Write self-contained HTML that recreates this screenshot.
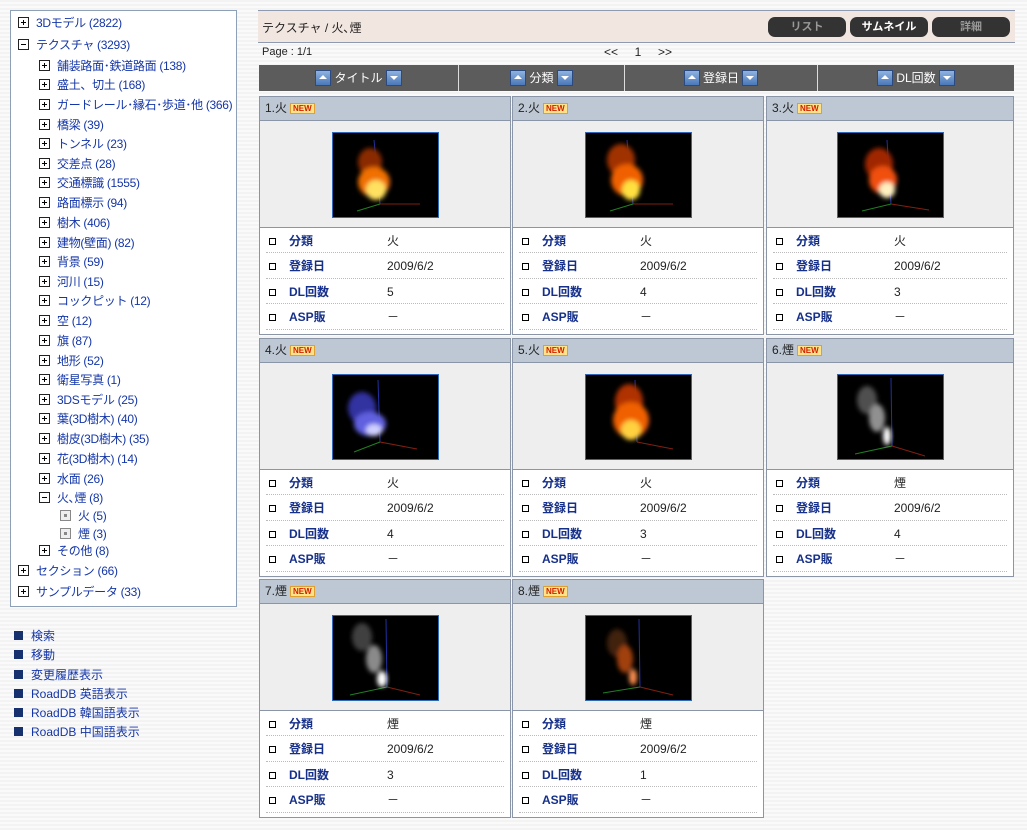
<!DOCTYPE html>
<html><head><meta charset="utf-8">
<style>
*{margin:0;padding:0;box-sizing:border-box}
body{width:1027px;height:830px;overflow:hidden;position:relative;font-family:"Liberation Sans","Noto Sans CJK JP",sans-serif;font-size:12px;color:#222;
background:repeating-linear-gradient(#f3f3f3 0 2px,#fafafa 2px 4px)}
a{color:#1a3cb0;text-decoration:none}
.abs{position:absolute}
#tree{left:10px;top:10px;width:227px;height:597px;background:#fff;border:1px solid #8ea0b8}
.ti{position:absolute;white-space:nowrap;line-height:14px;height:14px;letter-spacing:-0.3px}
.ti a{color:#1436a8}
.bx{display:inline-block;width:11px;height:11px;border:1px solid #222;vertical-align:-1px;margin-right:7px;position:relative;background:#fff}
.bx.p::before{content:"";position:absolute;left:2px;top:4px;width:5px;height:1px;background:#000}
.bx.p::after{content:"";position:absolute;left:4px;top:2px;width:1px;height:5px;background:#000}
.bx.m::before{content:"";position:absolute;left:2px;top:4px;width:5px;height:1px;background:#000}
.bx.d{border-color:#888;background:#eee}
.bx.d::before{content:"";position:absolute;left:3px;top:3px;width:3px;height:3px;background:#888}
.lk{position:absolute;left:14px;white-space:nowrap}
.lk::before{content:"";display:inline-block;width:9px;height:9px;background:#17306e;margin-right:8px;vertical-align:0}
.lk a{color:#1436a8}
#hdr{left:258px;top:10px;width:757px;height:33px;background:#f2e6e0;border-top:1px solid #8e9ab0;border-bottom:1px solid #8e9ab0}
.btn{position:absolute;top:6px;height:20px;width:78px;border-radius:7px;background:#333;color:#999;font-size:11px;text-align:center;line-height:20px;font-weight:bold}
#sort{left:259px;top:65px;width:755px;height:26px;background:#5c5c5c;color:#fff}
.sc{position:absolute;top:0;height:26px;line-height:26px;text-align:center;border-left:1px solid #ddd;font-size:12px}
.ar{display:inline-block;width:16px;height:16px;background:linear-gradient(#8fb3e0,#4a78b8);border:1px solid #2a4a80;vertical-align:-4px;margin:0 3px;position:relative}
.ar.u::after{content:"";position:absolute;left:3px;top:4px;border:4px solid transparent;border-bottom:4px solid #fff;border-top:0}
.ar.d::after{content:"";position:absolute;left:3px;top:5px;border:4px solid transparent;border-top:4px solid #fff;border-bottom:0}
.card{position:absolute;border:1px solid #8a96a8;background:#fff;height:239px}
.ct{height:24px;background:#bec8d4;border-bottom:1px solid #8a96a8;line-height:23px;padding-left:5px;font-size:12px}
.new{display:inline-block;font-size:8px;font-weight:bold;color:#d02000;background:#ffe28a;border:1px solid #e0a030;line-height:9px;padding:0 2px;margin-left:3px;vertical-align:1px}
.ci{height:107px;background:#eeeeee;border-bottom:1px solid #8a96a8;position:relative}
.ci svg{position:absolute;left:72px;top:11px}
.row{height:25.4px;margin:0 6px;border-bottom:1px dotted #bbb;position:relative;line-height:27px}
.row .cb{position:absolute;left:3px;top:10px;width:7px;height:7px;border:1px solid #000}
.row b{position:absolute;left:23px;color:#16308a;font-size:12px}
.row span{position:absolute;left:121px}
</style></head><body>
<svg width="0" height="0" style="position:absolute"><defs>
<filter id="bl"><feGaussianBlur stdDeviation="2.5"/></filter>
</defs></svg>

<div id="tree" class="abs">
<div class="ti" style="left:7px;top:5px"><span class="bx p"></span><a>3Dモデル (2822)</a></div>
<div class="ti" style="left:7px;top:27px"><span class="bx m"></span><a>テクスチャ (3293)</a></div>
<div class="ti" style="left:28px;top:48px"><span class="bx p"></span><a>舗装路面･鉄道路面 (138)</a></div>
<div class="ti" style="left:28px;top:67px"><span class="bx p"></span><a>盛土、切土 (168)</a></div>
<div class="ti" style="left:28px;top:87px"><span class="bx p"></span><a>ガードレール･縁石･歩道･他 (366)</a></div>
<div class="ti" style="left:28px;top:107px"><span class="bx p"></span><a>橋梁 (39)</a></div>
<div class="ti" style="left:28px;top:126px"><span class="bx p"></span><a>トンネル (23)</a></div>
<div class="ti" style="left:28px;top:146px"><span class="bx p"></span><a>交差点 (28)</a></div>
<div class="ti" style="left:28px;top:165px"><span class="bx p"></span><a>交通標識 (1555)</a></div>
<div class="ti" style="left:28px;top:185px"><span class="bx p"></span><a>路面標示 (94)</a></div>
<div class="ti" style="left:28px;top:205px"><span class="bx p"></span><a>樹木 (406)</a></div>
<div class="ti" style="left:28px;top:225px"><span class="bx p"></span><a>建物(壁面) (82)</a></div>
<div class="ti" style="left:28px;top:244px"><span class="bx p"></span><a>背景 (59)</a></div>
<div class="ti" style="left:28px;top:264px"><span class="bx p"></span><a>河川 (15)</a></div>
<div class="ti" style="left:28px;top:283px"><span class="bx p"></span><a>コックピット (12)</a></div>
<div class="ti" style="left:28px;top:303px"><span class="bx p"></span><a>空 (12)</a></div>
<div class="ti" style="left:28px;top:323px"><span class="bx p"></span><a>旗 (87)</a></div>
<div class="ti" style="left:28px;top:343px"><span class="bx p"></span><a>地形 (52)</a></div>
<div class="ti" style="left:28px;top:362px"><span class="bx p"></span><a>衛星写真 (1)</a></div>
<div class="ti" style="left:28px;top:382px"><span class="bx p"></span><a>3DSモデル (25)</a></div>
<div class="ti" style="left:28px;top:401px"><span class="bx p"></span><a>葉(3D樹木) (40)</a></div>
<div class="ti" style="left:28px;top:421px"><span class="bx p"></span><a>樹皮(3D樹木) (35)</a></div>
<div class="ti" style="left:28px;top:441px"><span class="bx p"></span><a>花(3D樹木) (14)</a></div>
<div class="ti" style="left:28px;top:461px"><span class="bx p"></span><a>水面 (26)</a></div>
<div class="ti" style="left:28px;top:480px"><span class="bx m"></span><a>火､煙 (8)</a></div>
<div class="ti" style="left:49px;top:498px"><span class="bx d"></span><a>火 (5)</a></div>
<div class="ti" style="left:49px;top:516px"><span class="bx d"></span><a>煙 (3)</a></div>
<div class="ti" style="left:28px;top:533px"><span class="bx p"></span><a>その他 (8)</a></div>
<div class="ti" style="left:7px;top:553px"><span class="bx p"></span><a>セクション (66)</a></div>
<div class="ti" style="left:7px;top:574px"><span class="bx p"></span><a>サンプルデータ (33)</a></div>
</div>

<div class="lk" style="top:627px"><a>検索</a></div>
<div class="lk" style="top:646px"><a>移動</a></div>
<div class="lk" style="top:666px"><a>変更履歴表示</a></div>
<div class="lk" style="top:685px"><a>RoadDB 英語表示</a></div>
<div class="lk" style="top:704px"><a>RoadDB 韓国語表示</a></div>
<div class="lk" style="top:723px"><a>RoadDB 中国語表示</a></div>

<div id="hdr" class="abs">
<div class="abs" style="left:4px;top:8px;font-size:12px">テクスチャ / 火､煙</div>
<div class="btn" style="left:510px">リスト</div>
<div class="btn" style="left:592px;color:#fff">サムネイル</div>
<div class="btn" style="left:674px">詳細</div>
</div>
<div class="abs" style="left:262px;top:46px;font-size:11px">Page : 1/1</div>
<div class="abs" style="left:604px;top:45px;font-size:12px">&lt;&lt;&nbsp;&nbsp;&nbsp;&nbsp;&nbsp;1&nbsp;&nbsp;&nbsp;&nbsp;&nbsp;&gt;&gt;</div>

<div id="sort" class="abs">
<div class="sc" style="left:0;width:199px;border-left:0"><span class="ar u"></span>タイトル<span class="ar d"></span></div>
<div class="sc" style="left:199px;width:166px"><span class="ar u"></span>分類<span class="ar d"></span></div>
<div class="sc" style="left:365px;width:193px"><span class="ar u"></span>登録日<span class="ar d"></span></div>
<div class="sc" style="left:558px;width:197px"><span class="ar u"></span>DL回数<span class="ar d"></span></div>
</div>

<div class="card" style="left:259px;top:96px;width:252px">
<div class="ct">1.火<span class="new">NEW</span></div>
<div class="ci"><svg width="107" height="86"><rect width="107" height="86" fill="#000" stroke="#2a6ab8" stroke-width="2"/><line x1="42" y1="8" x2="48" y2="72" stroke="#2030a0"/><line x1="48" y1="72" x2="88" y2="72" stroke="#802010"/><line x1="48" y1="72" x2="25" y2="79" stroke="#208020"/><g filter="url(#bl)"><ellipse cx="38" cy="30" rx="12" ry="14" fill="#8a2a00"/><ellipse cx="42" cy="50" rx="16" ry="15" fill="#f07000"/><ellipse cx="44" cy="58" rx="10" ry="10" fill="#ffe060"/></g></svg></div>
<div class="row"><i class="cb"></i><b>分類</b><span>火</span></div>
<div class="row"><i class="cb"></i><b>登録日</b><span>2009/6/2</span></div>
<div class="row"><i class="cb"></i><b>DL回数</b><span>5</span></div>
<div class="row"><i class="cb"></i><b>ASP販</b><span>－</span></div>
</div>

<div class="card" style="left:512px;top:96px;width:252px">
<div class="ct">2.火<span class="new">NEW</span></div>
<div class="ci"><svg width="107" height="86"><rect width="107" height="86" fill="#000" stroke="#2a6ab8" stroke-width="2"/><line x1="42" y1="8" x2="48" y2="72" stroke="#2030a0"/><line x1="48" y1="72" x2="88" y2="72" stroke="#802010"/><line x1="48" y1="72" x2="25" y2="79" stroke="#208020"/><g filter="url(#bl)"><ellipse cx="36" cy="28" rx="14" ry="16" fill="#a03000"/><ellipse cx="42" cy="48" rx="16" ry="16" fill="#f06000"/><ellipse cx="46" cy="58" rx="9" ry="10" fill="#ffe040"/></g></svg></div>
<div class="row"><i class="cb"></i><b>分類</b><span>火</span></div>
<div class="row"><i class="cb"></i><b>登録日</b><span>2009/6/2</span></div>
<div class="row"><i class="cb"></i><b>DL回数</b><span>4</span></div>
<div class="row"><i class="cb"></i><b>ASP販</b><span>－</span></div>
</div>

<div class="card" style="left:766px;top:96px;width:248px">
<div class="ct">3.火<span class="new">NEW</span></div>
<div class="ci"><svg width="107" height="86" style="left:70px"><rect width="107" height="86" fill="#000" stroke="#2a6ab8" stroke-width="2"/><line x1="50" y1="8" x2="54" y2="72" stroke="#2030a0"/><line x1="54" y1="72" x2="92" y2="78" stroke="#802010"/><line x1="54" y1="72" x2="25" y2="79" stroke="#208020"/><g filter="url(#bl)"><ellipse cx="42" cy="32" rx="14" ry="16" fill="#a02800"/><ellipse cx="46" cy="48" rx="14" ry="14" fill="#f05010"/><ellipse cx="50" cy="58" rx="8" ry="8" fill="#fff0c0"/></g></svg></div>
<div class="row"><i class="cb"></i><b>分類</b><span>火</span></div>
<div class="row"><i class="cb"></i><b>登録日</b><span>2009/6/2</span></div>
<div class="row"><i class="cb"></i><b>DL回数</b><span>3</span></div>
<div class="row"><i class="cb"></i><b>ASP販</b><span>－</span></div>
</div>

<div class="card" style="left:259px;top:338px;width:252px">
<div class="ct">4.火<span class="new">NEW</span></div>
<div class="ci"><svg width="107" height="86"><rect width="107" height="86" fill="#000" stroke="#2a6ab8" stroke-width="2"/><line x1="46" y1="6" x2="48" y2="68" stroke="#2030a0"/><line x1="48" y1="68" x2="85" y2="75" stroke="#802010"/><line x1="48" y1="68" x2="22" y2="78" stroke="#208020"/><g filter="url(#bl)"><ellipse cx="30" cy="34" rx="14" ry="16" fill="#3030a0"/><ellipse cx="38" cy="50" rx="16" ry="12" fill="#6060e0"/><ellipse cx="42" cy="56" rx="8" ry="6" fill="#d0d0ff"/></g></svg></div>
<div class="row"><i class="cb"></i><b>分類</b><span>火</span></div>
<div class="row"><i class="cb"></i><b>登録日</b><span>2009/6/2</span></div>
<div class="row"><i class="cb"></i><b>DL回数</b><span>4</span></div>
<div class="row"><i class="cb"></i><b>ASP販</b><span>－</span></div>
</div>

<div class="card" style="left:512px;top:338px;width:252px">
<div class="ct">5.火<span class="new">NEW</span></div>
<div class="ci"><svg width="107" height="86"><rect width="107" height="86" fill="#000" stroke="#2a6ab8" stroke-width="2"/><line x1="50" y1="6" x2="52" y2="68" stroke="#2030a0"/><line x1="52" y1="68" x2="88" y2="75" stroke="#802010"/><g filter="url(#bl)"><ellipse cx="44" cy="28" rx="14" ry="18" fill="#b03000"/><ellipse cx="46" cy="46" rx="18" ry="18" fill="#f06000"/><ellipse cx="46" cy="56" rx="10" ry="10" fill="#ffd040"/></g></svg></div>
<div class="row"><i class="cb"></i><b>分類</b><span>火</span></div>
<div class="row"><i class="cb"></i><b>登録日</b><span>2009/6/2</span></div>
<div class="row"><i class="cb"></i><b>DL回数</b><span>3</span></div>
<div class="row"><i class="cb"></i><b>ASP販</b><span>－</span></div>
</div>

<div class="card" style="left:766px;top:338px;width:248px">
<div class="ct">6.煙<span class="new">NEW</span></div>
<div class="ci"><svg width="107" height="86" style="left:70px"><rect width="107" height="86" fill="#000" stroke="#2a6ab8" stroke-width="2"/><line x1="54" y1="4" x2="55" y2="72" stroke="#2030a0"/><line x1="55" y1="72" x2="88" y2="82" stroke="#802010"/><line x1="55" y1="72" x2="18" y2="80" stroke="#208020"/><g filter="url(#bl)"><ellipse cx="30" cy="26" rx="10" ry="14" fill="#505050"/><ellipse cx="40" cy="44" rx="8" ry="14" fill="#909090"/><ellipse cx="50" cy="62" rx="4" ry="9" fill="#ffffff"/></g></svg></div>
<div class="row"><i class="cb"></i><b>分類</b><span>煙</span></div>
<div class="row"><i class="cb"></i><b>登録日</b><span>2009/6/2</span></div>
<div class="row"><i class="cb"></i><b>DL回数</b><span>4</span></div>
<div class="row"><i class="cb"></i><b>ASP販</b><span>－</span></div>
</div>

<div class="card" style="left:259px;top:579px;width:252px">
<div class="ct">7.煙<span class="new">NEW</span></div>
<div class="ci"><svg width="107" height="86"><rect width="107" height="86" fill="#000" stroke="#2a6ab8" stroke-width="2"/><line x1="54" y1="4" x2="55" y2="72" stroke="#2030a0"/><line x1="55" y1="72" x2="88" y2="80" stroke="#802010"/><line x1="55" y1="72" x2="18" y2="80" stroke="#208020"/><g filter="url(#bl)"><ellipse cx="30" cy="22" rx="10" ry="14" fill="#404040"/><ellipse cx="42" cy="44" rx="8" ry="14" fill="#8a8a8a"/><ellipse cx="50" cy="64" rx="5" ry="8" fill="#ffffff"/></g></svg></div>
<div class="row"><i class="cb"></i><b>分類</b><span>煙</span></div>
<div class="row"><i class="cb"></i><b>登録日</b><span>2009/6/2</span></div>
<div class="row"><i class="cb"></i><b>DL回数</b><span>3</span></div>
<div class="row"><i class="cb"></i><b>ASP販</b><span>－</span></div>
</div>

<div class="card" style="left:512px;top:579px;width:252px">
<div class="ct">8.煙<span class="new">NEW</span></div>
<div class="ci"><svg width="107" height="86"><rect width="107" height="86" fill="#000" stroke="#2a6ab8" stroke-width="2"/><line x1="54" y1="4" x2="55" y2="72" stroke="#2030a0"/><line x1="55" y1="72" x2="88" y2="80" stroke="#802010"/><line x1="55" y1="72" x2="18" y2="78" stroke="#208020"/><g filter="url(#bl)"><ellipse cx="32" cy="28" rx="10" ry="14" fill="#402010"/><ellipse cx="40" cy="44" rx="8" ry="14" fill="#a04010"/><ellipse cx="48" cy="62" rx="4" ry="8" fill="#ff9050"/></g></svg></div>
<div class="row"><i class="cb"></i><b>分類</b><span>煙</span></div>
<div class="row"><i class="cb"></i><b>登録日</b><span>2009/6/2</span></div>
<div class="row"><i class="cb"></i><b>DL回数</b><span>1</span></div>
<div class="row"><i class="cb"></i><b>ASP販</b><span>－</span></div>
</div>

</body></html>
